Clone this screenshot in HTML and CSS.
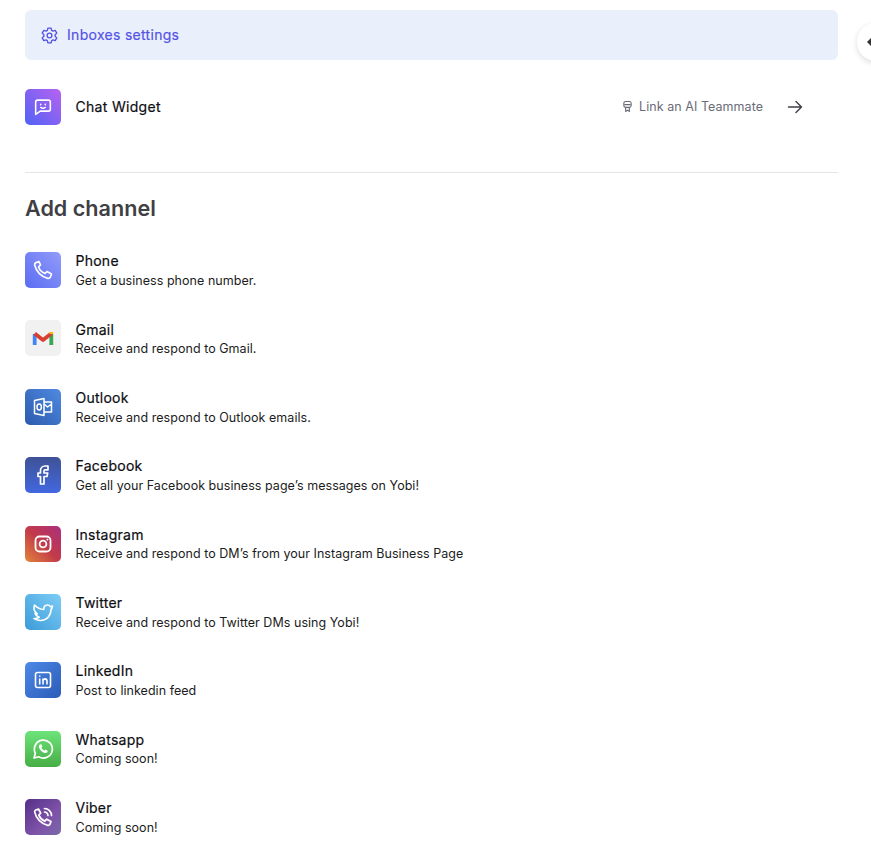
FILE: index.html
```html
<!DOCTYPE html>
<html lang="en">
<head>
<meta charset="utf-8">
<title>Inboxes settings</title>
<link rel="stylesheet" href="styles.css">
</head>
<body>
<main class="page">
  <a class="banner">
    <svg class="banner-icon" viewBox="0 0 24 24" fill="none" stroke="currentColor" stroke-width="1.7" stroke-linejoin="round"><circle cx="12" cy="12" r="3"/><path d="M10 2.600h4l.7 2.900 1.600.9 2.900-.8 2 3.400-2.100 2.100v1.800l2.100 2.100-2 3.400-2.900-.8-1.600.9-.7 2.900h-4l-.7-2.900-1.600-.9-2.900.8-2-3.400 2.100-2.100v-1.800L2.800 9l2-3.400 2.900.8 1.600-.9z"/></svg>
    <span class="banner-text">Inboxes settings</span>
  </a>

  <section class="connected">
    <div class="tile tile-chat">
      <svg viewBox="0 0 24 24" fill="none" stroke="#fff" stroke-width="1.700" stroke-linejoin="round" stroke-linecap="round"><path d="M6 4.500h12a2 2 0 0 1 2 2v8a2 2 0 0 1-2 2H9l-5 3.500V6.500a2 2 0 0 1 2-2z"/><path d="M9.500 9v.6M14.500 9v.6M9.500 12.500c1.500 1 3.500 1 5 0"/></svg>
    </div>
    <div class="connected-name">Chat Widget</div>
    <div class="link-ai">
      <svg viewBox="0 0 12 14" fill="none" stroke="currentColor" stroke-width="1.200" stroke-linejoin="round"><rect x="2" y="1.500" width="8" height="6.500" rx="2"/><path d="M2.500 5h7M4 8v4.500l2-1.500 2 1.500V8"/></svg>
      <span>Link an AI Teammate</span>
    </div>
    <svg class="arrow" viewBox="0 0 16 16" fill="none" stroke="currentColor" stroke-width="1.400" stroke-linecap="round" stroke-linejoin="round"><path d="M1.500 8h13M9 2.500 14.500 8 9 13.500"/></svg>
  </section>

  <hr class="divider">

  <h2 class="heading">Add channel</h2>

  <ul class="channels">
    <li class="channel">
      <div class="tile tile-phone">
        <svg viewBox="0 0 24 24" fill="none" stroke="#fff" stroke-width="1.700" stroke-linejoin="round"><path d="M8 3.500 5 4.600C4 5 3.500 6 3.700 7.200 5 13.500 10.500 19 16.800 20.300c1.200.2 2.200-.3 2.600-1.300l1.100-3-4.500-2.500-2 2c-2.700-1-5.500-3.800-6.500-6.500l2-2z"/></svg>
      </div>
      <div class="text"><div class="name">Phone</div><div class="desc">Get a business phone number.</div></div>
    </li>
    <li class="channel">
      <div class="tile tile-gmail">
        <svg viewBox="0 0 24 24" fill="none" stroke-width="3.800" stroke-linejoin="round"><path d="M3.700 8v11" stroke="#4285f4"/><path d="M20.300 8v11" stroke="#34a853"/><path d="M3.700 7.500 12 14l8.300-6.500" stroke="#d93f30"/><path d="M20.300 6v2" stroke="#f6bb13"/></svg>
      </div>
      <div class="text"><div class="name">Gmail</div><div class="desc">Receive and respond to Gmail.</div></div>
    </li>
    <li class="channel">
      <div class="tile tile-outlook">
        <svg viewBox="0 0 24 24" fill="none" stroke="#fff" stroke-width="1.500" stroke-linejoin="round"><path d="M3.500 5.500 13 3.500v17l-9.500-2z"/><ellipse cx="8.200" cy="12" rx="2.200" ry="3"/><path d="M13 7h7.500v10H13M13 9l3.500 3 4-3"/></svg>
      </div>
      <div class="text"><div class="name">Outlook</div><div class="desc">Receive and respond to Outlook emails.</div></div>
    </li>
    <li class="channel">
      <div class="tile tile-facebook">
        <svg viewBox="0 0 24 24" fill="none" stroke="#fff" stroke-width="1.700" stroke-linejoin="round"><path d="M17 3h-3a4.500 4.500 0 0 0-4.500 4.500V10H7v3.500h2.500V21h3.500v-7.500h3l.7-3.500H13V8a1.200 1.200 0 0 1 1.200-1.200H17z"/></svg>
      </div>
      <div class="text"><div class="name">Facebook</div><div class="desc">Get all your Facebook business page’s messages on Yobi!</div></div>
    </li>
    <li class="channel">
      <div class="tile tile-instagram">
        <svg viewBox="0 0 24 24" fill="none" stroke="#fff" stroke-width="1.800"><rect x="4.500" y="4.500" width="15" height="15" rx="4"/><circle cx="12" cy="12" r="3.400"/><circle cx="16.400" cy="7.600" r=".6" fill="#fff" stroke-width=".8"/></svg>
      </div>
      <div class="text"><div class="name">Instagram</div><div class="desc">Receive and respond to DM’s from your Instagram Business Page</div></div>
    </li>
    <li class="channel">
      <div class="tile tile-twitter">
        <svg viewBox="0 0 24 24" fill="none" stroke="#fff" stroke-width="1.600" stroke-linejoin="round"><path d="M21.500 6c-.8.400-1.400.5-2.100.6-.8-1.100-1.900-1.600-3-1.600-2.300 0-4 1.900-3.600 4.500C9 9.300 6 7.700 3.500 5c-1 2.900-.5 6.500 2.800 8.900-1 0-1.600-.2-2.200-.6.500 2 1.900 3.300 4.100 4-1.100.9-2.800 1.400-5.200 1.300 2.100 1.200 4.400 1.900 6.600 1.900 6.200-.2 10.400-4.700 10.400-10.900.8-.8 1.600-2.100 1.500-3.600z"/></svg>
      </div>
      <div class="text"><div class="name">Twitter</div><div class="desc">Receive and respond to Twitter DMs using Yobi!</div></div>
    </li>
    <li class="channel">
      <div class="tile tile-linkedin">
        <svg viewBox="0 0 24 24" fill="none" stroke="#fff" stroke-width="1.600"><rect x="4.500" y="4.500" width="15" height="15" rx="2"/><path d="M8.700 10.500V16.500M8.700 7.500v1.200M12 16.500v-6M12 13.300c0-3.200 4-3.200 4 0v3.200"/></svg>
      </div>
      <div class="text"><div class="name">LinkedIn</div><div class="desc">Post to linkedin feed</div></div>
    </li>
    <li class="channel">
      <div class="tile tile-whatsapp">
        <svg viewBox="0 0 24 24" fill="none" stroke="#fff" stroke-width="1.700" stroke-linejoin="round"><path d="M3 21l1.400-4.700A9 9 0 1 1 7.700 19.800z"/><path fill="#fff" stroke="none" d="M9 7.500c-.9.500-1.300 1.500-1 2.700.7 2.700 3 5 5.800 5.800 1.200.3 2.200-.1 2.700-1l.2-1.300-2.300-1.200-1 1.100c-1.300-.5-2.500-1.700-3-3l1.100-1-1.200-2.300z"/></svg>
      </div>
      <div class="text"><div class="name">Whatsapp</div><div class="desc">Coming soon!</div></div>
    </li>
    <li class="channel">
      <div class="tile tile-viber">
        <svg viewBox="0 0 24 24" fill="none" stroke="#fff" stroke-width="1.700" stroke-linejoin="round" stroke-linecap="round"><path d="M7.500 4 4.800 5C4 5.400 3.500 6.200 3.700 7.200 5 13.500 10.500 19 16.800 20.300c1 .2 1.800-.3 2.200-1.100l1-2.700-4.300-2.300-1.900 1.900c-2.500-1-5-3.500-6-6l1.900-1.900z"/><path d="M13.500 3.500a7 7 0 0 1 7 7M13.500 7a3.500 3.500 0 0 1 3.500 3.500"/></svg>
      </div>
      <div class="text"><div class="name">Viber</div><div class="desc">Coming soon!</div></div>
    </li>
  </ul>

  <button class="collapse" aria-label="Collapse"><span class="caret"></span></button>
</main>
</body>
</html>
```
FILE: styles.css
```css
html, body {
  margin: 0;
  height: 100%;
  background: #fff;
  overflow: hidden;
}
body {
  font-family: Inter, "Liberation Sans", sans-serif;
  color: #0d0d12;
}
.page {
  position: relative;
  height: 843px;
  overflow: hidden;
  box-sizing: border-box;
  padding: 10px 33px 0 25px;
}
.banner {
  display: flex;
  align-items: center;
  gap: 8px;
  height: 50px;
  box-sizing: border-box;
  padding-left: 15px;
  background: #e9f0fb;
  border-radius: 6px;
  color: #5553e6;
  font-size: 14px;
  font-weight: 400;
  letter-spacing: .3px;
  -webkit-text-stroke: .2px;
}
.banner-icon {
  width: 19px;
  height: 19px;
}
.banner-text {
  padding-bottom: 2px;
}
.connected {
  display: flex;
  align-items: center;
  margin-top: 29px;
  padding-right: 35px;
}
.tile {
  flex: none;
  width: 36px;
  height: 36px;
  border-radius: 5px;
  display: flex;
  align-items: center;
  justify-content: center;
}
.tile svg {
  width: 24px;
  height: 24px;
}
.tile-chat svg {
  width: 22px;
  height: 22px;
}
.connected-name {
  margin-left: 14.500px;
  padding-bottom: 2px;
  font-size: 14px;
  font-weight: 400;
  letter-spacing: .3px;
  -webkit-text-stroke: .2px;
  flex: 1;
}
.link-ai {
  display: flex;
  align-items: center;
  gap: 6px;
  font-size: 12.500px;
  letter-spacing: .05px;
  color: #6b6b78;
  padding-bottom: 2px;
}
.link-ai svg {
  width: 11px;
  height: 13px;
}
.arrow {
  width: 16px;
  height: 16px;
  margin-left: 24px;
  color: #3f3f46;
}
.divider {
  border: 0;
  border-top: 1px solid #e5e5e8;
  margin: 47px 0 0;
}
.heading {
  margin: 22px 0 0;
  font-size: 21.600px;
  line-height: 27px;
  font-weight: 600;
  color: #3f3f44;
}
.channels {
  list-style: none;
  margin: 30px 0 0;
  padding: 0;
  display: flex;
  flex-direction: column;
  gap: 32.375px;
}
.channel {
  display: flex;
  align-items: flex-start;
  height: 36px;
  gap: 14.500px;
}
.text {
  margin-top: -0.8px;
}
.name {
  font-size: 14px;
  font-weight: 400;
  letter-spacing: .25px;
  -webkit-text-stroke: .2px;
  line-height: 20px;
}
.desc {
  margin-top: .6px;
  font-size: 12.500px;
  letter-spacing: .04px;
  line-height: 18px;
  color: #1c1c22;
}
.tile-chat { background: linear-gradient(45deg, #4f63f5, #b862f0); }
.tile-phone { background: linear-gradient(45deg, #5b6cf2, #929cfa); }
.tile-gmail { background: #f1f1f1; }
.tile-outlook { background: linear-gradient(45deg, #2c5aae, #4f8ae0); }
.tile-facebook { background: linear-gradient(180deg, #3f5296, #4268e0); }
.tile-instagram { background: linear-gradient(45deg, #e2853a, #c23a4a 50%, #a9307e); }
.tile-twitter { background: linear-gradient(45deg, #3d9bd8, #7ccdf5); }
.tile-linkedin { background: linear-gradient(135deg, #4d8ae6, #2b5bb8); }
.tile-whatsapp { background: linear-gradient(180deg, #6ce47a, #47ae45); }
.tile-viber { background: linear-gradient(135deg, #553088, #7d52a8 60%, #7a6aa8); }
.collapse {
  position: absolute;
  left: 857px;
  top: 23px;
  width: 38px;
  height: 38px;
  border: 0;
  padding: 0;
  border-radius: 50%;
  background: #fff;
  box-shadow: 0 2px 6px rgba(0, 0, 0, .14);
}
.caret {
  position: absolute;
  left: 10px;
  top: 15px;
  width: 0;
  height: 0;
  border-top: 4px solid transparent;
  border-bottom: 4px solid transparent;
  border-right: 4px solid #333;
}
```
